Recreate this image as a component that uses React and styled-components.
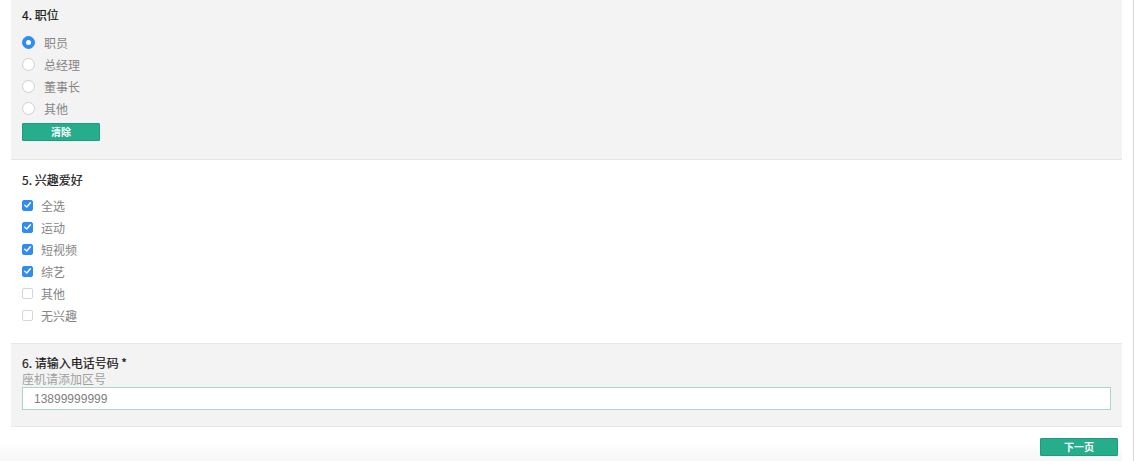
import React, {useState} from 'react';
import styled, {createGlobalStyle} from 'styled-components';

const COLORS = {
  green: '#25ad8c',
  blue: '#2f8cf4',
  grey_bg: '#f3f3f3',
  line: '#e6e6e6',
  title: '#1a1a1a',
  text: '#858585',
  hint: '#a0a0a0',
};

const GlobalStyle = createGlobalStyle`
  body {
    margin: 0;
    background: #fff;
    font-family: "Noto Sans CJK SC", "Liberation Sans", sans-serif;
  }
  * { box-sizing: border-box; }
`;

const ROLES = ['职员', '总经理', '董事长', '其他'];
const HOBBIES = ['全选', '运动', '短视频', '综艺', '其他', '无兴趣'];

const App = () => {
  const [role, setRole] = useState('职员');
  const [hobbies, setHobbies] = useState(['全选', '运动', '短视频', '综艺']);
  const [phone, setPhone] = useState('13899999999');

  const toggle = (h) => {
    setHobbies(hobbies.includes(h) ? hobbies.filter(x => x !== h) : [...hobbies, h]);
  };

  return (
    <Page>
      <GlobalStyle/>
      <Form>
        <Section $grey $top="7px" $bottom="18px">
          <Title>4. 职位</Title>
          <Options>
            {ROLES.map(r => (
              <Option key={r} onClick={() => setRole(r)}>
                <Radio $checked={role === r}/>
                <RadioLabel>{r}</RadioLabel>
              </Option>
            ))}
          </Options>
          <Button $small onClick={() => setRole('')}>清除</Button>
        </Section>

        <Section $top="12px" $bottom="17px">
          <Title>5. 兴趣爱好</Title>
          <Options $gap="6px">
            {HOBBIES.map(h => (
              <Option key={h} onClick={() => toggle(h)}>
                <Checkbox $checked={hobbies.includes(h)}>
                  {hobbies.includes(h) && (
                    <svg width="10" height="10" viewBox="0 0 10 10">
                      <path d="M2 5.2 L4.2 7.3 L8.2 2.6" fill="none" stroke="#fff" strokeWidth="1.6" strokeLinecap="round" strokeLinejoin="round"/>
                    </svg>
                  )}
                </Checkbox>
                <CheckLabel>{h}</CheckLabel>
              </Option>
            ))}
          </Options>
        </Section>

        <Section $grey $bordered $top="11px" $bottom="16px">
          <Title>6. 请输入电话号码 *</Title>
          <Hint>座机请添加区号</Hint>
          <Input value={phone} onChange={e => setPhone(e.target.value)}/>
        </Section>

        <Footer>
          <Button>下一页</Button>
        </Footer>
      </Form>
      <ScrollThumb/>
    </Page>
  );
};

const Page = styled.div`
  position: relative;
  width: 1134px;
  height: 461px;
  overflow: hidden;
  padding: 0 11px;
  border-right: 1px solid #d6d6d6;
`;

const Form = styled.div`
  width: 1111px;
  display: flex;
  flex-direction: column;
`;

const Section = styled.div`
  background: ${({$grey}) => ($grey ? COLORS.grey_bg : '#fff')};
  padding: ${({$top}) => $top} 11px ${({$bottom}) => $bottom};
  border-top: ${({$bordered}) => ($bordered ? `1px solid ${COLORS.line}` : 'none')};
  border-bottom: ${({$grey}) => ($grey ? `1px solid ${COLORS.line}` : 'none')};
  display: flex;
  flex-direction: column;
  align-items: flex-start;
`;

const Title = styled.div`
  font-size: 12px;
  line-height: 16px;
  height: 16px;
  color: ${COLORS.title};
  font-weight: 400;
  -webkit-text-stroke: 0.2px ${COLORS.title};
`;

const Hint = styled.div`
  font-size: 12px;
  line-height: 16px;
  height: 16px;
  color: ${COLORS.hint};
`;

const Options = styled.div`
  display: flex;
  flex-direction: column;
  margin-top: ${({$gap}) => $gap || '8px'};
`;

const Option = styled.label`
  display: flex;
  align-items: center;
  height: 22px;
  cursor: pointer;
`;

const Radio = styled.span`
  width: 13px;
  height: 13px;
  border-radius: 50%;
  background: ${({$checked}) => ($checked ? COLORS.blue : '#fff')};
  border: 1px solid ${({$checked}) => ($checked ? COLORS.blue : '#cfcfcf')};
  position: relative;

  &:after {
    content: '';
    display: ${({$checked}) => ($checked ? 'block' : 'none')};
    position: absolute;
    width: 5px;
    height: 5px;
    border-radius: 50%;
    background: #fff;
    top: 3px;
    left: 3px;
  }
`;

const RadioLabel = styled.span`
  margin-left: 9px;
  font-size: 12px;
  color: ${COLORS.text};
`;

const Checkbox = styled.span`
  width: 11px;
  height: 11px;
  border-radius: 2px;
  display: flex;
  align-items: center;
  justify-content: center;
  background: ${({$checked}) => ($checked ? COLORS.blue : '#fff')};
  border: 1px solid ${({$checked}) => ($checked ? COLORS.blue : '#d6d6d6')};
`;

const CheckLabel = styled.span`
  margin-left: 8px;
  font-size: 12px;
  color: ${COLORS.text};
`;

const Button = styled.button`
  width: 78px;
  height: 18px;
  margin-top: ${({$small}) => ($small ? '4px' : '0')};
  padding: 0;
  border: 1px solid #1f9c7d;
  border-radius: 1px;
  background: ${COLORS.green};
  color: #fff;
  font-family: inherit;
  font-size: 10px;
  font-weight: 700;
  line-height: 16px;
  cursor: pointer;
`;

const Input = styled.input`
  width: 100%;
  height: 23px;
  border: 1px solid #a9d8c8;
  background: #fff;
  outline: none;
  padding: 0 11px;
  font-family: "Liberation Sans", sans-serif;
  font-size: 12px;
  color: #808080;
`;

const Footer = styled.div`
  height: 34px;
  display: flex;
  justify-content: flex-end;
  align-items: flex-start;
  padding: 11px 4px 0 0;
  margin-left: -11px;
  width: 1122px;
  background: linear-gradient(to bottom, #fff 40%, #f6f6f6 100%);
`;

const ScrollThumb = styled.div`
  position: absolute;
  right: -1px;
  top: 43px;
  width: 1px;
  height: 55px;
  background: #8a8a8a;
`;

export default App;
